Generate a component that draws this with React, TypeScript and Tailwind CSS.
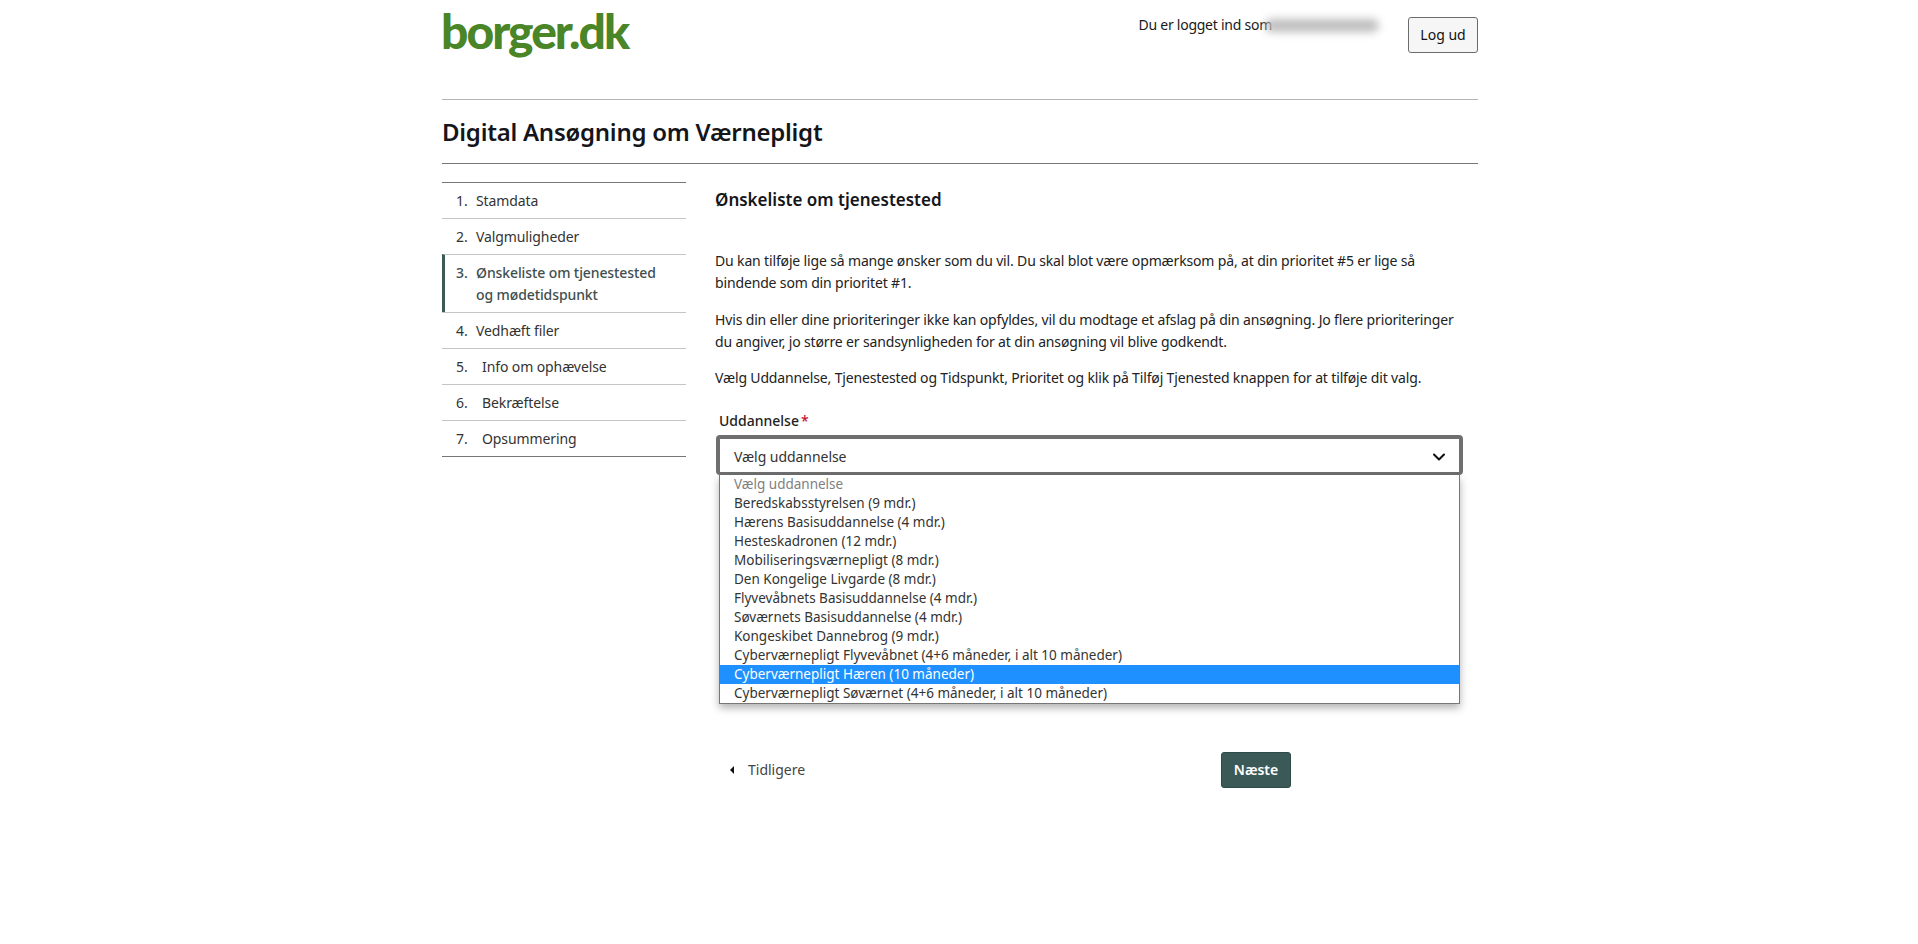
import { ChevronDown } from 'lucide-react';

const STEPS = [
  { n: '1.', label: 'Stamdata' },
  { n: '2.', label: 'Valgmuligheder' },
  { n: '3.', label: 'Ønskeliste om tjenestested og mødetidspunkt', active: true },
  { n: '4.', label: 'Vedhæft filer' },
  { n: '5.', label: 'Info om ophævelse', wide: true },
  { n: '6.', label: 'Bekræftelse', wide: true },
  { n: '7.', label: 'Opsummering', wide: true },
];

const OPTIONS = [
  'Vælg uddannelse',
  'Beredskabsstyrelsen (9 mdr.)',
  'Hærens Basisuddannelse (4 mdr.)',
  'Hesteskadronen (12 mdr.)',
  'Mobiliseringsværnepligt (8 mdr.)',
  'Den Kongelige Livgarde (8 mdr.)',
  'Flyvevåbnets Basisuddannelse (4 mdr.)',
  'Søværnets Basisuddannelse (4 mdr.)',
  'Kongeskibet Dannebrog (9 mdr.)',
  'Cyberværnepligt Flyvevåbnet (4+6 måneder, i alt 10 måneder)',
  'Cyberværnepligt Hæren (10 måneder)',
  'Cyberværnepligt Søværnet (4+6 måneder, i alt 10 måneder)',
];

export default function App() {
  return (
    <div className="min-h-[944px] bg-white font-['Noto_Sans',sans-serif] text-[#1a1a1a]">
      <div className="ml-[442px] w-[1036px]">
        {/* Header */}
        <header className="flex h-[100px] items-start justify-between border-b border-[#b5b5b5]">
          <div className="mt-[3px] -ml-px font-['Lato',sans-serif] text-[48px] leading-[56px] font-black tracking-[-2px] text-[#4a8528]">
            borger.dk
          </div>
          <div className="flex items-start">
            <div className="mt-[15px] flex items-center text-sm leading-5 tracking-[-0.25px]">
              <span>Du er logget ind som</span>
              <span className="ml-[-7px] h-[13px] w-[114px] rounded-full bg-[#bdbdbd] blur-[4px]" />
            </div>
            <button className="mt-[17px] ml-[29px] h-[36px] w-[70px] rounded-[3px] border border-[#6b6b6b] bg-[#f6f6f6] text-sm text-[#111]">
              Log ud
            </button>
          </div>
        </header>

        <h1 className="flex h-[64px] items-center border-b border-[#777] text-2xl font-semibold tracking-[-0.25px] text-[#14161a]">
          Digital Ansøgning om Værnepligt
        </h1>

        <div className="mt-[18px] flex items-start gap-[30px]">
          {/* Steps */}
          <nav className="w-[244px] shrink-0 border-t border-b border-[#777]">
            {STEPS.map((s, i) => (
              <div
                key={s.n}
                className={`flex pt-[7px] pr-[24px] pb-[6px] text-sm leading-[22px] tracking-[-0.1px] ${i > 0 ? 'border-t border-[#c4c4c4]' : ''} ${
                  s.active ? 'border-l-[3px] border-l-[#3b5a57] pl-[11px] font-medium text-[#3f4f4f]' : 'pl-[14px] text-[#333]'
                }`}
              >
                <span className={s.wide ? 'w-[26px] shrink-0' : 'w-[20px] shrink-0'}>{s.n}</span>
                <span>{s.label}</span>
              </div>
            ))}
          </nav>

          {/* Main */}
          <main className="min-w-0 flex-1">
            <h2 className="mt-[6px] -ml-px text-[17px] leading-6 font-semibold text-[#14161a]">Ønskeliste om tjenestested</h2>

            <div className="mt-[38px] -ml-px w-[745px] text-sm leading-[22px] tracking-[-0.15px] text-[#222]">
              <p>
                Du kan tilføje lige så mange ønsker som du vil. Du skal blot være opmærksom på, at din prioritet #5 er lige så
                bindende som din prioritet #1.
              </p>
              <p className="mt-[15px]">
                Hvis din eller dine prioriteringer ikke kan opfyldes, vil du modtage et afslag på din ansøgning. Jo flere
                prioriteringer du angiver, jo større er sandsynligheden for at din ansøgning vil blive godkendt.
              </p>
              <p className="mt-[14px]">
                Vælg Uddannelse, Tjenestested og Tidspunkt, Prioritet og klik på Tilføj Tjenested knappen for at tilføje dit valg.
              </p>
            </div>

            <div className="mt-[22px] ml-[3px] text-sm leading-5 font-medium text-[#222]">
              Uddannelse<span className="ml-[2px] text-[#c8102e]">*</span>
            </div>

            <div className="relative mt-[4px] w-[747px]">
              <div className="flex h-[40px] items-center justify-between rounded-[4px] border-[4px] border-b-[3px] border-[#6f6f6f] pt-[3px] pr-[10px] pl-[14px] text-sm tracking-[-0.05px] text-[#333]">
                <span>Vælg uddannelse</span>
                <ChevronDown size={20} strokeWidth={2.5} className="text-[#111]" />
              </div>
              {/* Open list */}
              <ul className="absolute top-[40px] left-[3px] w-[741px] border border-t-0 border-[#777] bg-white text-[13.5px] leading-[19px] text-[#333] shadow-[0_4px_8px_rgba(0,0,0,0.3)]">
                {OPTIONS.map((o, i) => (
                  <li
                    key={o}
                    className={`h-[19px] pl-[14px] whitespace-nowrap ${i === 0 ? 'text-[#808080]' : ''} ${
                      i === 10 ? 'bg-[#1e90ff] text-white' : ''
                    }`}
                  >
                    {o}
                  </li>
                ))}
              </ul>
            </div>

            {/* Pager */}
            <div className="mt-[277px] flex w-[575px] items-center justify-between">
              <a className="ml-[14px] flex items-center text-sm text-[#444]">
                <span className="mr-[14px] h-0 w-0 border-y-[4px] border-r-[4px] border-y-transparent border-r-[#111]" />
                Tidligere
              </a>
              <button className="h-[36px] w-[70px] rounded-[3px] border border-[#2f4a47] bg-[#3b5a57] text-sm font-semibold text-white">
                Næste
              </button>
            </div>
          </main>
        </div>
      </div>
    </div>
  );
}
